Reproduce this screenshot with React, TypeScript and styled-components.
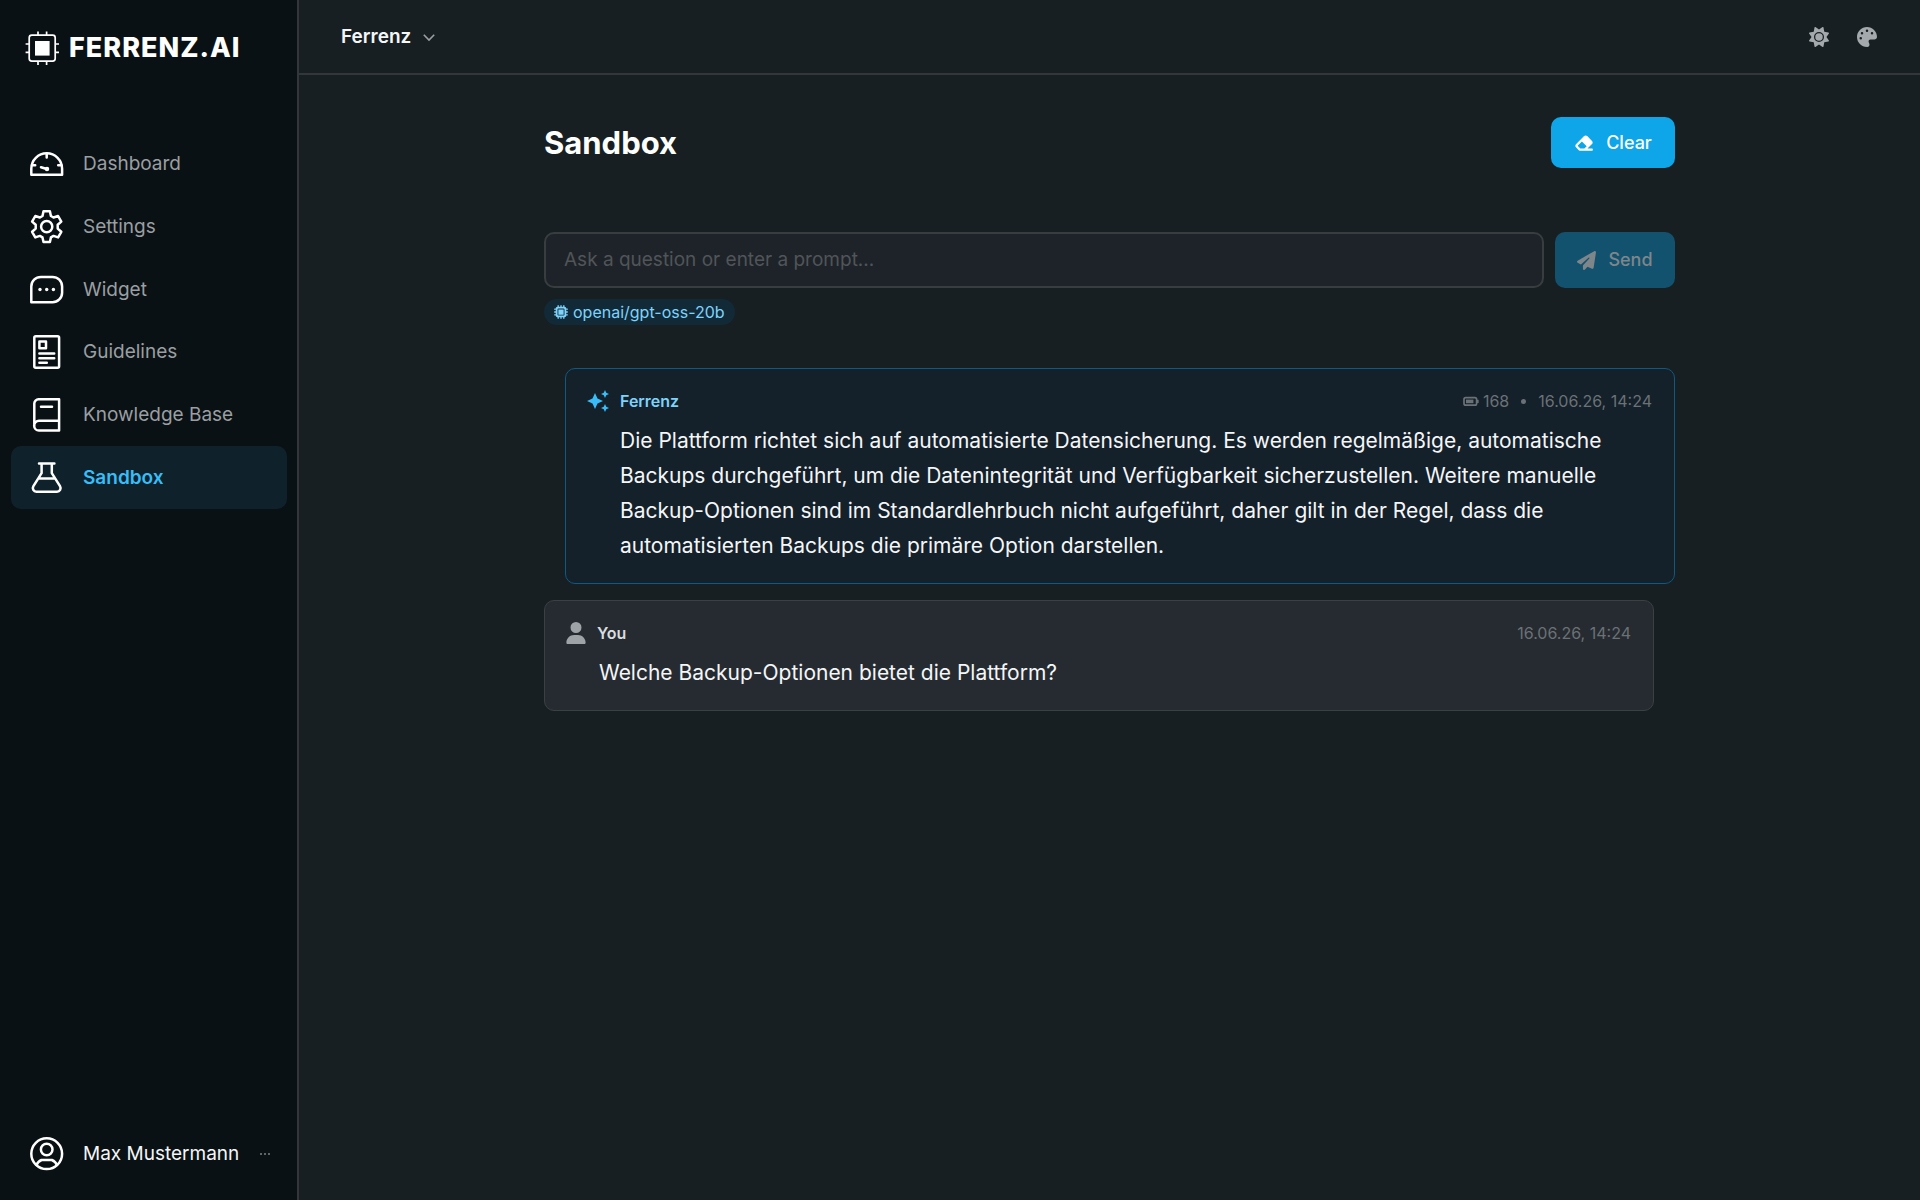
import React, { useState } from 'react';
import styled, { createGlobalStyle, css } from 'styled-components';
import { FaEraser, FaMicrochip, FaPalette, FaPaperPlane, FaSun, FaUser } from 'react-icons/fa6';
import { MdAutoAwesome } from 'react-icons/md';

const color = {
  sidebar: '#0a1114',
  page: '#181f22',
  line: '#31373a',
  text: '#f4f6f7',
  muted: '#9a9fa2',
  faint: '#6b7276',
  accent: '#38bdf8',
  accentSoft: '#7dd3fc',
  primary: '#0ea5e9',
};

const GlobalStyle = createGlobalStyle`
  *, *::before, *::after { box-sizing: border-box; }
  body {
    margin: 0;
    background: ${color.page};
    color: ${color.text};
    font-family: Inter, "Liberation Sans", sans-serif;
    font-size: 19px;
    line-height: 24px;
  }
  button, input { font: inherit; color: inherit; }
  button { cursor: pointer; }
  svg { display: block; flex: none; }
`;

const Shell = styled.div`
  display: grid;
  grid-template-columns: 299px minmax(0, 1fr);
  min-height: 100vh;
`;

const Sidebar = styled.aside`
  display: flex;
  flex-direction: column;
  padding: 28px 10px 15px 11px;
  background: ${color.sidebar};
  border-right: 2px solid ${color.line};
`;

const Brand = styled.a`
  display: flex;
  align-items: center;
  gap: 10px;
  height: 40px;
  padding-left: 14px;
  color: #fff;
  font-size: 27px;
  font-weight: 800;
  letter-spacing: 1px;
  text-decoration: none;
`;

const Nav = styled.nav`
  display: grid;
  grid-auto-rows: 1fr;
  height: 376px;
  margin-top: 65px;
`;

const rowStyles = css`
  display: flex;
  align-items: center;
  gap: 19px;
  padding: 0 19px;
  border-radius: 10px;
  text-decoration: none;
  white-space: nowrap;
  svg { color: #fff; }
`;

const NavLink = styled.a<{ $active?: boolean }>`
  ${rowStyles}
  color: ${(p) => (p.$active ? color.accent : color.muted)};
  font-weight: ${(p) => (p.$active ? 600 : 400)};
  background: ${(p) => (p.$active ? '#0f222b' : 'transparent')};
`;

const Account = styled.button`
  ${rowStyles}
  width: 100%;
  height: 62px;
  margin-top: auto;
  padding-right: 17px;
  border: 0;
  background: none;
  color: ${color.text};
  text-align: left;
`;

const AccountMore = styled.span`
  display: flex;
  gap: 2px;
  margin-left: auto;
`;

const MoreDot = styled.i`
  width: 2px;
  height: 2px;
  border-radius: 1px;
  background: #7b8184;
`;

const Column = styled.div`
  display: flex;
  flex-direction: column;
  min-width: 0;
`;

const TopBar = styled.header`
  display: flex;
  align-items: center;
  justify-content: space-between;
  height: 75px;
  padding: 0 43px 0 42px;
  border-bottom: 2px solid ${color.line};
`;

const ProjectSwitch = styled.button`
  display: flex;
  align-items: center;
  gap: 12px;
  padding: 0;
  border: 0;
  background: none;
  font-weight: 600;
  svg { color: ${color.muted}; }
`;

const Tools = styled.div`
  display: flex;
  gap: 28px;
`;

const ToolButton = styled.button`
  display: flex;
  padding: 0;
  border: 0;
  background: none;
  color: #a3a9ac;
`;

const Content = styled.main`
  width: 100%;
  max-width: 1179px;
  margin: 0 auto;
  padding: 42px 24px;
`;

const TitleRow = styled.div`
  display: flex;
  align-items: center;
  justify-content: space-between;
`;

const Title = styled.h1`
  margin: 0;
  font-size: 31px;
  line-height: 40px;
  font-weight: 700;
  color: #fff;
`;

const PrimaryButton = styled.button<{ $minWidth: number }>`
  display: flex;
  align-items: center;
  justify-content: center;
  gap: 12px;
  min-width: ${(p) => p.$minWidth}px;
  height: 51px;
  padding: 0 22px;
  border: 0;
  border-radius: 10px;
  background: ${color.primary};
  color: #fff;
  font-size: 18px;
  font-weight: 500;
  &:disabled {
    background: #12526f;
    color: #7f868a;
    cursor: default;
  }
`;

const PromptForm = styled.form`
  display: flex;
  gap: 11px;
  height: 56px;
  margin-top: 64px;
  ${PrimaryButton} { height: auto; }
`;

const PromptInput = styled.input`
  flex: 1;
  min-width: 0;
  padding: 0 18px;
  border: 2px solid #383d40;
  border-radius: 10px;
  background: #1e2329;
  outline: 0;
  &::placeholder { color: #505558; opacity: 1; }
`;

const ModelChip = styled.span`
  display: inline-flex;
  align-items: center;
  gap: 5px;
  height: 26px;
  margin-top: 11px;
  padding: 0 10px;
  border-radius: 13px;
  background: #122a38;
  color: ${color.accentSoft};
  font-size: 16px;
  vertical-align: top;
`;

const Thread = styled.section`
  display: flex;
  flex-direction: column;
  gap: 16px;
  margin-top: 43px;
`;

const Card = styled.article<{ $from: 'assistant' | 'user' }>`
  padding: 20px 22px 20px 20px;
  border: 1px solid;
  border-radius: 10px;
  ${(p) =>
    p.$from === 'assistant'
      ? css`
          margin-left: 21px;
          background: #14202a;
          border-color: #0e5a82;
        `
      : css`
          margin-right: 21px;
          background: #262b31;
          border-color: #3a4043;
        `}
`;

const CardHead = styled.header<{ $from: 'assistant' | 'user' }>`
  display: flex;
  align-items: center;
  gap: 10px;
  height: 24px;
  font-size: 16px;
  color: ${(p) => (p.$from === 'assistant' ? color.accentSoft : '#d9dcde')};
  svg { color: ${(p) => (p.$from === 'assistant' ? color.accent : '#9da3a6')}; }
`;

const Author = styled.strong`
  font-weight: 600;
`;

const Meta = styled.div`
  display: flex;
  align-items: center;
  gap: 12px;
  margin-left: auto;
  color: ${color.faint};
`;

const Tokens = styled.span`
  display: flex;
  align-items: center;
  gap: 4px;
  && svg { color: ${color.faint}; }
`;

const Bullet = styled.i`
  width: 5px;
  height: 5px;
  border-radius: 3px;
  background: ${color.faint};
`;

const Body = styled.p`
  margin: 10px 0 0;
  padding: 0 0 0 34px;
  font-size: 21px;
  line-height: 35px;
`;

const LogoMark = () => (
  <svg width="34" height="34" viewBox="0 0 34 34" fill="none" stroke="currentColor" strokeWidth="1.7">
    <rect x="4.2" y="4.2" width="26" height="26" rx="2.6" />
    <rect x="10" y="10" width="14.6" height="14.6" fill="currentColor" stroke="none" />
    <path d="M13 .5V4M21.6 .5V4M13 30.4V34M21.6 30.4V34M.6 13H4M.6 21.4H4M30.4 13H34M30.4 21.4H34" />
  </svg>
);

const Line = ({ children }: { children: React.ReactNode }) => (
  <svg
    width="34"
    height="34"
    viewBox="0 0 34 34"
    fill="none"
    stroke="currentColor"
    strokeWidth="2.5"
    strokeLinecap="round"
    strokeLinejoin="round"
  >
    {children}
  </svg>
);

const DashboardIcon = () => (
  <Line>
    <path d="M1.3 27.800V21.7a15.4 15.4 0 0 1 30.8 0V27.800Z" />
    <path d="M16.7 6.5v4M2 18.300h3.200M28.200 18.300h3.200M16.800 22 11 20.200" />
    <circle cx="17" cy="22" r="1" fill="currentColor" />
  </Line>
);

const SettingsIcon = () => (
  <Line>
    <circle cx="16.7" cy="16.7" r="5.6" />
    <path d="M13.5 1.300h6.400l1 4.700 2.600 1.500 4.600-1.500 3.200 5.600-3.600 3.200v3.800l3.600 3.200-3.200 5.600-4.600-1.500-2.600 1.500-1 4.700h-6.400l-1-4.700-2.600-1.500-4.600 1.500-3.200-5.600 3.600-3.200v-3.800L2.100 11.600 5.300 6l4.600 1.500L12.500 6Z" />
  </Line>
);

const WidgetIcon = () => (
  <Line>
    <path d="M1.3 29.300V13.500a9.600 9.600 0 0 1 9.600-9.600h11.600a9.600 9.600 0 0 1 9.600 9.600v6.200a9.600 9.600 0 0 1-9.600 9.600Z" />
    <g fill="currentColor" stroke="none">
      <circle cx="10" cy="16.5" r="1.7" />
      <circle cx="16.7" cy="16.5" r="1.7" />
      <circle cx="23.4" cy="16.5" r="1.7" />
    </g>
  </Line>
);

const GuidelinesIcon = () => (
  <Line>
    <rect x="4.3" y="1.3" width="24.8" height="31.4" rx="1.5" />
    <rect x="9.4" y="6.6" width="6.6" height="6.6" />
    <path d="M9.400 18.600h14.800M9.400 23.200h14.800M9.400 27.800h7.400" />
  </Line>
);

const BookIcon = () => (
  <Line>
    <path d="M29.100 22.800V1.300H8.500a4.200 4.200 0 0 0-4.200 4.200v22.400M29.100 22.800H9a4.700 4.700 0 0 0 0 9.700h20.100ZM11 8.700h11" />
  </Line>
);

const FlaskIcon = () => (
  <Line>
    <path d="M9 2.500h15.400M11.600 2.500v9.700L3.400 25.200a3.600 3.600 0 0 0 3 5.500h20.600a3.600 3.600 0 0 0 3-5.500L21.800 12.200V2.500M8.300 17.500h16.800" />
  </Line>
);

const UserIcon = () => (
  <Line>
    <circle cx="16.7" cy="16.7" r="15.4" />
    <circle cx="16.7" cy="12.5" r="5.8" />
    <path d="M6.500 28a11.500 8.500 0 0 1 5-5h10.400a11.500 8.500 0 0 1 5 5" />
  </Line>
);

const ChevronIcon = () => (
  <svg width="12" height="12" viewBox="0 0 12 12" fill="none" stroke="currentColor" strokeWidth="1.6">
    <path d="M.8 3.800 6 9l5.200-5.200" />
  </svg>
);

const TokenIcon = () => (
  <svg width="16" height="16" viewBox="0 0 16 16" fill="none" stroke="currentColor" strokeWidth="1.7">
    <rect x="1" y="4.6" width="12.6" height="7.6" rx="1.7" />
    <rect x="3" y="6.6" width="7.4" height="3.6" fill="currentColor" stroke="none" />
    <path d="M14.800 6.800v3.200" />
  </svg>
);

const navItems = [
  { label: 'Dashboard', icon: <DashboardIcon /> },
  { label: 'Settings', icon: <SettingsIcon /> },
  { label: 'Widget', icon: <WidgetIcon /> },
  { label: 'Guidelines', icon: <GuidelinesIcon /> },
  { label: 'Knowledge Base', icon: <BookIcon /> },
  { label: 'Sandbox', icon: <FlaskIcon /> },
];

export default function App() {
  const [prompt, setPrompt] = useState('');

  return (
    <>
      <GlobalStyle />
      <Shell>
        <Sidebar>
          <Brand href="#">
            <LogoMark />
            FERRENZ.AI
          </Brand>
          <Nav>
            {navItems.map((item) => (
              <NavLink key={item.label} href="#" $active={item.label === 'Sandbox'}>
                {item.icon}
                {item.label}
              </NavLink>
            ))}
          </Nav>
          <Account type="button">
            <UserIcon />
            Max Mustermann
            <AccountMore>
              <MoreDot />
              <MoreDot />
              <MoreDot />
            </AccountMore>
          </Account>
        </Sidebar>
        <Column>
          <TopBar>
            <ProjectSwitch type="button">
              Ferrenz
              <ChevronIcon />
            </ProjectSwitch>
            <Tools>
              <ToolButton type="button" aria-label="Theme">
                <FaSun size={20} />
              </ToolButton>
              <ToolButton type="button" aria-label="Colors">
                <FaPalette size={20} />
              </ToolButton>
            </Tools>
          </TopBar>
          <Content>
            <TitleRow>
              <Title>Sandbox</Title>
              <PrimaryButton type="button" $minWidth={124} onClick={() => setPrompt('')}>
                <FaEraser size={20} />
                Clear
              </PrimaryButton>
            </TitleRow>
            <PromptForm onSubmit={(e) => e.preventDefault()}>
              <PromptInput
                type="text"
                aria-label="Prompt"
                placeholder="Ask a question or enter a prompt..."
                value={prompt}
                onChange={(e) => setPrompt(e.target.value)}
              />
              <PrimaryButton type="submit" $minWidth={120} disabled={!prompt}>
                <FaPaperPlane size={19} />
                Send
              </PrimaryButton>
            </PromptForm>
            <ModelChip>
              <FaMicrochip size={14} />
              openai/gpt-oss-20b
            </ModelChip>
            <Thread>
              <Card $from="assistant">
                <CardHead $from="assistant">
                  <MdAutoAwesome size={24} />
                  <Author>Ferrenz</Author>
                  <Meta>
                    <Tokens>
                      <TokenIcon />
                      168
                    </Tokens>
                    <Bullet />
                    <time>16.06.26, 14:24</time>
                  </Meta>
                </CardHead>
                <Body>
                  Die Plattform richtet sich auf automatisierte Datensicherung. Es werden regelmäßige, automatische
                  Backups durchgeführt, um die Datenintegrität und Verfügbarkeit sicherzustellen. Weitere manuelle
                  Backup-Optionen sind im Standardlehrbuch nicht aufgeführt, daher gilt in der Regel, dass die
                  automatisierten Backups die primäre Option darstellen.
                </Body>
              </Card>
              <Card $from="user">
                <CardHead $from="user">
                  <FaUser size={22} />
                  <Author>You</Author>
                  <Meta>
                    <time>16.06.26, 14:24</time>
                  </Meta>
                </CardHead>
                <Body>Welche Backup-Optionen bietet die Plattform?</Body>
              </Card>
            </Thread>
          </Content>
        </Column>
      </Shell>
    </>
  );
}
